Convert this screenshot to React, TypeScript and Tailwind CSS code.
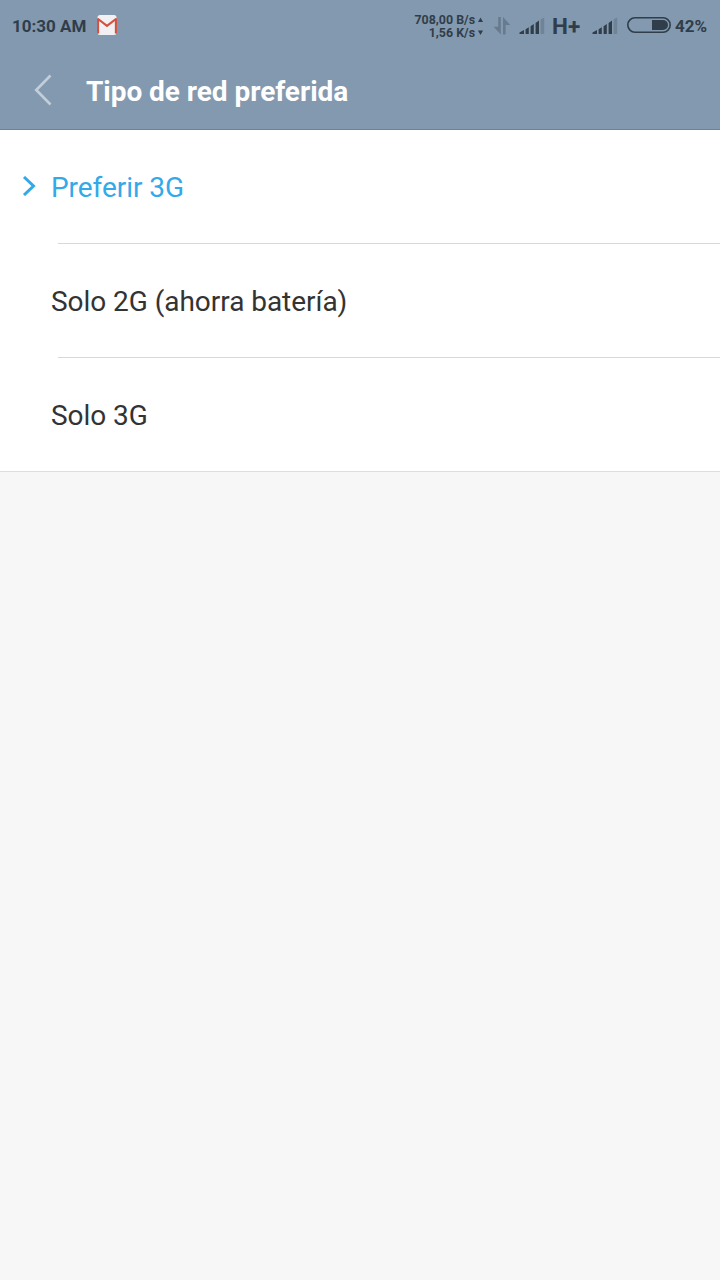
interface NetworkOption {
  id: string;
  label: string;
}

const OPTIONS: NetworkOption[] = [
  { id: "prefer-3g", label: "Preferir 3G" },
  { id: "only-2g", label: "Solo 2G (ahorra batería)" },
  { id: "only-3g", label: "Solo 3G" },
];

const SELECTED = "prefer-3g";

function GmailIcon() {
  return (
    <svg width="20" height="20" viewBox="0 0 20 20" className="mb-[2px] ml-[10px] shrink-0">
      <rect x="0.5" y="0" width="19" height="20" rx="2.5" fill="#f1f1f3" />
      <path d="M1.1 18.5V4L10 10.8L18.9 4V18.5" fill="none" stroke="#d4513f" strokeWidth="2.1" strokeLinejoin="round" />
    </svg>
  );
}

function DataArrows() {
  return (
    <svg width="18" height="18" viewBox="0 0 18 18" className="shrink-0" fill="#687b8e">
      <path d="M5.2 0H7.8V17.5L0.5 9.8H5.2Z" />
      <path d="M10 0L17.3 8H12.6V17.5H10Z" />
    </svg>
  );
}

function SignalBars() {
  return (
    <svg width="26" height="18" viewBox="0 0 26 18" className="shrink-0" fill="#2f3e4a">
      <path d="M0.5 17V15.6L5 13V17Z" />
      <path d="M6.6 12.3L9.8 10.3V17H6.6Z" />
      <path d="M11.6 9.2L14.8 7V17H11.6Z" />
      <path d="M16.6 6L20 3.6V17H16.6Z" />
      <path d="M21.6 2.6L25.2 0.4V17H21.6Z" fill="#708498" />
    </svg>
  );
}

function Battery() {
  return (
    <svg width="44" height="16" viewBox="0 0 44 16" className="shrink-0">
      <rect x="0.8" y="0.8" width="42.4" height="14.4" rx="7.2" fill="none" stroke="#2f3e4a" strokeWidth="1.6" />
      <path d="M25 3H36A5 5 0 0 1 36 13H25Z" fill="#2f3e4a" />
    </svg>
  );
}

function StatusBar() {
  return (
    <div className="flex h-[52px] items-center justify-between pr-3 pl-3 text-[#2f3e4a]">
      <div className="flex items-center">
        <span className="w-[75px] text-[17px] leading-5 font-bold whitespace-nowrap">10:30 AM</span>
        <GmailIcon />
      </div>

      <div className="flex items-center">
        <div className="flex flex-col pb-px text-[12.4px] leading-[13px] font-bold">
          <div className="flex items-center justify-end gap-[3px]">
            <span>708,00 B/s</span>
            <svg width="5" height="5" viewBox="0 0 5 5" fill="#2f3e4a"><path d="M2.5 0.5L5 5H0Z" /></svg>
          </div>
          <div className="flex items-center justify-end gap-[3px]">
            <span>1,56 K/s</span>
            <svg width="5" height="5" viewBox="0 0 5 5" fill="#2f3e4a"><path d="M0 0.5H5L2.5 5Z" /></svg>
          </div>
        </div>
        <div className="ml-[10px] flex items-center">
          <DataArrows />
        </div>
        <div className="ml-[8px] flex items-center">
          <SignalBars />
        </div>
        <span className="ml-[7px] w-[28px] text-[22.5px] leading-6 font-bold whitespace-nowrap">H+</span>
        <div className="ml-[12px] flex items-center">
          <SignalBars />
        </div>
        <div className="ml-[9px] flex items-center pb-[2px]">
          <Battery />
        </div>
        <span className="ml-1 w-[33px] text-[17px] leading-5 font-bold whitespace-nowrap">42%</span>
      </div>
    </div>
  );
}

export default function App() {
  return (
    <div className="min-h-screen w-full bg-[#f7f7f7] font-['Roboto','Liberation_Sans',sans-serif]">
      {/* Header */}
      <header className="h-[130px] border-b border-[#6f8292] bg-[#8399af]">
        <StatusBar />
        <div className="flex h-[77px] items-center pl-[34px]">
          <button className="flex w-[52px] items-center pb-px" aria-label="Atrás">
            <svg width="18" height="32" viewBox="0 0 18 32" fill="none" stroke="#c3cedb" strokeWidth="2.6">
              <path d="M16.5 1.5L2.2 16L16.5 30.5" />
            </svg>
          </button>
          <h1 className="pt-[2px] text-[28px] leading-8 font-bold tracking-[-0.04px] text-white">
            Tipo de red preferida
          </h1>
        </div>
      </header>

      {/* Options */}
      <ul className="border-b border-[#dedede] bg-white">
        {OPTIONS.map((option, i) => {
          const selected = option.id === SELECTED;
          return (
            <li key={option.id}>
              <div className="flex h-[113px] items-center pl-[22px]">
                <div className="w-[29px] pb-px">
                  {selected && (
                    <svg width="14" height="20" viewBox="0 0 14 20" fill="none" stroke="#33a9e9" strokeWidth="3">
                      <path d="M2 1L11.5 10L2 19" />
                    </svg>
                  )}
                </div>
                <span
                  className={`pt-[2px] text-[28px] leading-8 tracking-[-0.04px] ${
                    selected ? "text-[#33a9e9]" : "text-[#333333]"
                  }`}
                >
                  {option.label}
                </span>
              </div>
              {i < OPTIONS.length - 1 && <div className="ml-[58px] h-px bg-[#d8d8d8]" />}
            </li>
          );
        })}
      </ul>
    </div>
  );
}
